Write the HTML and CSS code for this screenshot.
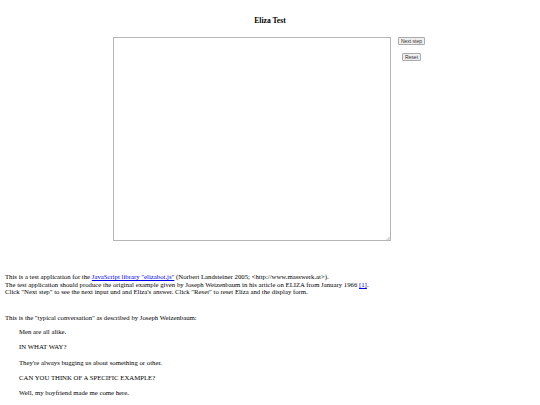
FILE: index.html
```html
<!DOCTYPE html>
<html>
<head>
<meta charset="utf-8">
<title>Eliza Test</title>
<link rel="stylesheet" href="styles.css">
</head>
<body>
<h1 class="title">Eliza Test</h1>
<div class="console">
  <div class="area-wrap">
    <textarea class="display"></textarea>
    <svg class="grip" width="4" height="4" viewBox="0 0 4 4"><path d="M0.5 4 L4 0.5 M2.2 4 L4 2.2" stroke="#9a9a9a" stroke-width="0.6"/></svg>
  </div>
  <div class="controls">
    <button class="btn">Next step</button>
    <button class="btn">Reset</button>
  </div>
</div>
<p class="intro">This is a test application for the <a href="#">JavaScript library "elizabot.js"</a> (Norbert Landsteiner 2005; &lt;http://www.masswerk.at&gt;).<br>
The test application should produce the original example given by Joseph Weizenbaum in his article on ELIZA from January 1966 <a href="#">[1]</a>.<br>
Click "Next step" to see the next input und and Eliza's answer. Click "Reset" to reset Eliza and the display form.</p>
<p class="lead">This is the "typical conversation" as described by Joseph Weizenbaum:</p>
<div class="conv">
  <p>Men are all alike.</p>
  <p>IN WHAT WAY?</p>
  <p>They're always bugging us about something or other.</p>
  <p>CAN YOU THINK OF A SPECIFIC EXAMPLE?</p>
  <p>Well, my boyfriend made me come here.</p>
</div>
</body>
</html>
```
FILE: styles.css
```css
html, body { background: #fff; }
body {
  margin: 0;
  padding: 0 5px;
  font-family: "Liberation Serif", "Times New Roman", serif;
  font-size: 6.75px;
  line-height: 7.5px;
  color: #000;
}
.title {
  font-size: 7.6px;
  font-weight: bold;
  text-align: center;
  margin: 0;
  padding-top: 16px;
  line-height: 10px;
}
.console {
  display: flex;
  justify-content: center;
  gap: 5px;
  margin-top: 11px;
}
.area-wrap {
  position: relative;
  width: 278px;
  height: 204px;
}
.display {
  display: block;
  box-sizing: border-box;
  width: 278px;
  height: 204px;
  margin: 0;
  border: 1px solid #b5b5b5;
  resize: none;
  background: #fff;
}
.grip {
  position: absolute;
  right: 1px;
  bottom: 1px;
}
.controls {
  display: flex;
  flex-direction: column;
  align-items: center;
  gap: 8px;
  width: 31px;
}
.btn {
  font-family: "Liberation Sans", Arial, sans-serif;
  font-size: 5px;
  line-height: 6px;
  padding: 0 2px;
  height: 8px;
  border: 1px solid #aaa;
  border-radius: 1px;
  background: #efefef;
  color: #333;
  white-space: nowrap;
}
.intro {
  margin: 32px 0 0;
}
.lead {
  margin: 18px 0 0;
}
.conv {
  margin-left: 14px;
  margin-top: 7px;
}
.conv p {
  margin: 0 0 7.8px;
}
a { color: #00e; text-decoration: underline; }
```
